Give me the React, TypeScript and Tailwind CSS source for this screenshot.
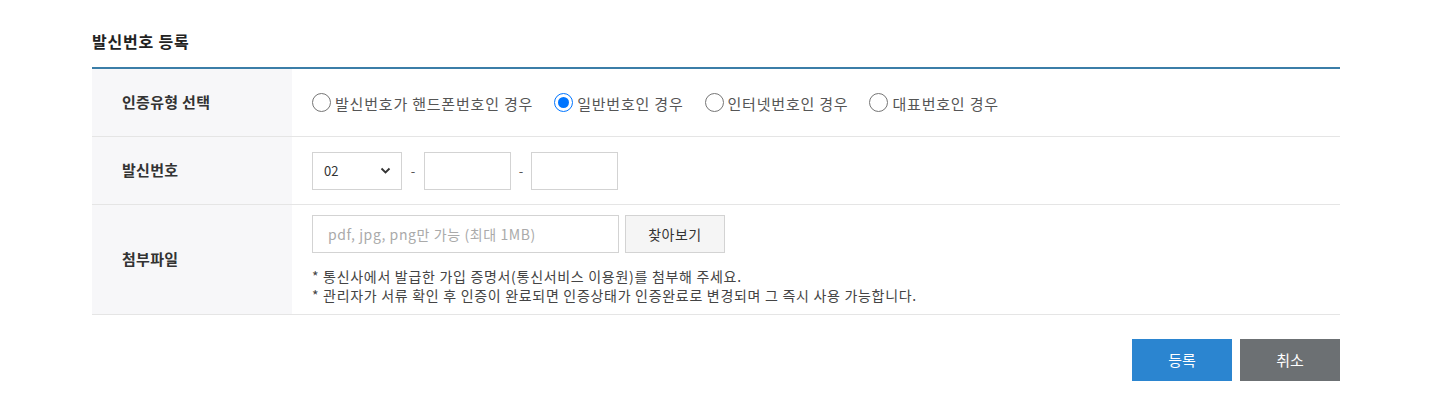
import React from "react";

const font = { fontFamily: '"Noto Sans CJK KR", "Noto Sans", sans-serif' };

const radios = [
  { label: "발신번호가 핸드폰번호인 경우", checked: false },
  { label: "일반번호인 경우", checked: true },
  { label: "인터넷번호인 경우", checked: false },
  { label: "대표번호인 경우", checked: false },
];

function Radio({ label, checked }: { label: string; checked: boolean }) {
  return (
    <label className="flex items-center gap-[4px] cursor-pointer">
      {checked ? (
        <span className="w-[19px] h-[19px] rounded-full border-[1.5px] border-[#0075ff] flex items-center justify-center">
          <span className="w-[11px] h-[11px] rounded-full bg-[#0075ff]" />
        </span>
      ) : (
        <span className="w-[19px] h-[19px] rounded-full border border-[#767676] bg-white" />
      )}
      <span className="text-[15px] tracking-[0.8px] text-[#555] leading-none pt-[1px]">{label}</span>
    </label>
  );
}

function Row({ label, children, className }: { label: string; children: React.ReactNode; className: string }) {
  return (
    <div className={`flex border-b border-[#e5e5e5] ${className}`}>
      <div className="w-[200px] shrink-0 bg-[#f7f7f9] flex items-center pl-[30px] text-[15px] tracking-[0.3px] font-bold text-[#333]">
        {label}
      </div>
      <div className="flex-1 px-[20px]">{children}</div>
    </div>
  );
}

export default function App() {
  return (
    <div className="bg-white min-h-[402px] pt-[29px]" style={font}>
      <div className="ml-[92px] w-[1248px]">
        <h2 className="text-[16px] tracking-[0.8px] font-bold text-[#222] leading-[24px] mb-[14px]">발신번호 등록</h2>
        <div className="border-t-2 border-[#3b7ea8]">
          <Row label="인증유형 선택" className="h-[68px]">
            <div className="h-full flex items-center gap-[21px]">
              {radios.map((r) => (
                <Radio key={r.label} label={r.label} checked={r.checked} />
              ))}
            </div>
          </Row>
          <Row label="발신번호" className="h-[68px]">
            <div className="h-full flex items-center">
              <div className="w-[90px] h-[38px] border border-[#d3d3d3] flex items-center justify-between pl-[11px] pr-[10px]">
                <span className="text-[13px] text-[#333]">02</span>
                <svg width="11" height="7" viewBox="0 0 11 7" fill="none">
                  <path d="M1.5 1.5 L5.5 5.5 L9.5 1.5" stroke="#333" strokeWidth="1.8" />
                </svg>
              </div>
              <span className="w-[22px] text-center text-[13px] text-[#555]">-</span>
              <div className="w-[87px] h-[38px] border border-[#d3d3d3]" />
              <span className="w-[20px] text-center text-[13px] text-[#555]">-</span>
              <div className="w-[87px] h-[38px] border border-[#d3d3d3]" />
            </div>
          </Row>
          <Row label="첨부파일" className="h-[110px]">
            <div className="pt-[10px]">
              <div className="flex gap-[6px]">
                <div className="w-[307px] h-[38px] border border-[#d3d3d3] flex items-center pl-[15px] text-[14px] tracking-[0.6px] text-[#aaa]">
                  pdf, jpg, png만 가능 (최대 1MB)
                </div>
                <button className="w-[100px] h-[38px] border border-[#d3d3d3] bg-[#f5f5f5] text-[14px] tracking-[0.5px] text-[#333]">
                  찾아보기
                </button>
              </div>
              <div className="mt-[14px] text-[14px] tracking-[0.7px] text-[#444] leading-[19px]">
                <p>* 통신사에서 발급한 가입 증명서(통신서비스 이용원)를 첨부해 주세요.</p>
                <p>* 관리자가 서류 확인 후 인증이 완료되면 인증상태가 인증완료로 변경되며 그 즉시 사용 가능합니다.</p>
              </div>
            </div>
          </Row>
        </div>
        <div className="flex justify-end gap-[8px] mt-[24px]">
          <button className="w-[100px] h-[42px] bg-[#2b85d0] text-white text-[15px]">등록</button>
          <button className="w-[100px] h-[42px] bg-[#6c7073] text-white text-[15px]">취소</button>
        </div>
      </div>
    </div>
  );
}
